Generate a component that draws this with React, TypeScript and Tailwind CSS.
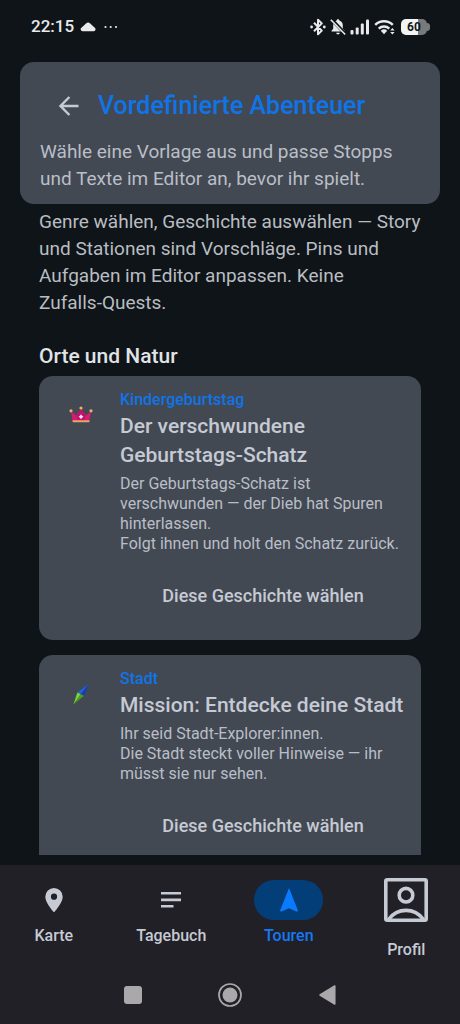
import type { ReactNode } from "react";

type Story = {
  genre: string;
  title: string;
  lines: string[];
  icon: ReactNode;
};

function CrownIcon() {
  return (
    <svg viewBox="0 0 24 18" className="h-[18px] w-6" aria-hidden="true">
      <path
        d="M2 5.2 7.2 9.4 12 2.8 16.8 9.4 22 5.2 20.4 15H3.6Z"
        fill="#d81b72"
      />
      <path d="M7.2 9.4 12 2.8 16.8 9.4 15 15H9Z" fill="#c2136b" />
      <path d="M3.4 14.3h17.2l-.4 2H3.8Z" fill="#e3a869" />
      <circle cx="2" cy="4.8" r="1.6" fill="#e8b36c" />
      <circle cx="12" cy="2" r="1.6" fill="#e8b36c" />
      <circle cx="22" cy="4.8" r="1.6" fill="#e8b36c" />
      <path
        d="m12 8.2 1 1.5 1.5 1-1.5 1-1 1.6-1-1.6-1.5-1 1.5-1Z"
        fill="#ffe3f3"
      />
    </svg>
  );
}

function NeedleIcon() {
  return (
    <svg viewBox="0 0 18 24" className="h-6 w-[18px]" aria-hidden="true">
      <path d="M17.2 1.8 5.4 10.6l3.3 1.6Z" fill="#1f63e0" />
      <path d="M17.2 1.8 8.7 12.2l3.4 1.6Z" fill="#143fae" />
      <path d="M5.4 10.6 1.4 22.4l7.3-10.2Z" fill="#7fd63a" />
      <path d="M12.1 13.8 1.4 22.4l7.3-10.2Z" fill="#4e9c24" />
    </svg>
  );
}

const stories: Story[] = [
  {
    genre: "Kindergeburtstag",
    title: "Der verschwundene Geburtstags-Schatz",
    lines: [
      "Der Geburtstags-Schatz ist verschwunden — der Dieb hat Spuren hinterlassen.",
      "Folgt ihnen und holt den Schatz zurück.",
    ],
    icon: <CrownIcon />,
  },
  {
    genre: "Stadt",
    title: "Mission: Entdecke deine Stadt",
    lines: [
      "Ihr seid Stadt-Explorer:innen.",
      "Die Stadt steckt voller Hinweise — ihr müsst sie nur sehen.",
    ],
    icon: <NeedleIcon />,
  },
];

function StatusBar() {
  return (
    <div className="flex h-[62px] shrink-0 items-start justify-between pl-[31px] pr-[30px] pt-4 text-[#e8eaec]">
      <div className="flex h-[22px] items-center gap-1.5">
        <span className="text-[17px] font-medium">22:15</span>
        <svg viewBox="0 0 16 10" className="h-2.5 w-4" fill="currentColor" aria-hidden="true">
          <path d="M2.6 9.2A1.9 1.9 0 0 1 1.700 5.600L6 1.400a3 3 0 0 1 4.200.2l4.600 4.200a1.900 1.900 0 0 1-.9 3.400Z" />
        </svg>
        <svg viewBox="0 0 14 4" className="ml-0.5 h-1 w-3.5" fill="currentColor" aria-hidden="true">
          <circle cx="1.5" cy="2" r="1.1" />
          <circle cx="6.7" cy="2" r="1.1" />
          <circle cx="12" cy="2" r="1.1" />
        </svg>
      </div>

      <div className="flex h-[22px] items-center gap-1">
        <svg viewBox="0 0 16 18" className="h-[18px] w-4" aria-hidden="true">
          <path
            d="M4 4.800 11.800 12.600 8 16.300V1.700l3.800 3.700L4 13.200"
            fill="none"
            stroke="currentColor"
            strokeWidth="2"
            strokeLinejoin="round"
          />
          <circle cx="1.6" cy="9" r="1.4" fill="currentColor" />
          <circle cx="14.3" cy="9" r="1.4" fill="currentColor" />
        </svg>
        <svg viewBox="0 0 16 18" className="h-[18px] w-4" aria-hidden="true">
          <path
            d="M8 1.2c.8 0 1.3.5 1.3 1.2 2.2.6 3.5 2.4 3.5 4.8v3.6l1.7 2v.8H1.5v-.8l1.7-2V7.2c0-2.4 1.3-4.2 3.5-4.8 0-.7.5-1.2 1.3-1.2ZM6.2 14.7h3.6a1.8 1.8 0 0 1-3.600 0Z"
            fill="currentColor"
          />
          <path d="m1.2 1 14 14.8" stroke="#0e1418" strokeWidth="3.4" />
          <path d="m.8 1.8 14.400 14.700" stroke="currentColor" strokeWidth="1.6" />
        </svg>
        <svg viewBox="0 0 20 16" className="h-4 w-5" fill="currentColor" aria-hidden="true">
          <rect x="0.5" y="11" width="3" height="4.5" rx="1" />
          <rect x="5.7" y="8.5" width="3" height="7" rx="1" />
          <rect x="10.8" y="4.5" width="3" height="11" rx="1" />
          <rect x="16" y="0.5" width="3" height="15" rx="1" />
        </svg>
        <svg viewBox="0 0 22 16" className="h-4 w-[22px]" aria-hidden="true">
          <g fill="none" stroke="currentColor" strokeWidth="2.4">
            <path d="M1.2 5.800a12.500 12.500 0 0 1 17.600 0" />
            <path d="M4.700 9.600a7.600 7.600 0 0 1 10.600 0" />
          </g>
          <path d="M6.8 11.7a4.700 4.700 0 0 1 6.400 0L10 15.200Z" fill="currentColor" />
          <path d="m16.200 11.500 2.200-2.600 2.200 2.600ZM16.200 12.900l2.200 2.600 2.200-2.600Z" fill="currentColor" />
        </svg>
        <span className="ml-px flex items-center">
          <span className="flex h-4 w-[26px] items-center justify-center rounded-[5px] bg-linear-to-r from-[#f2f3f4] from-65% to-[#777a7d] to-65% text-[12px] font-bold text-[#15181b]">
            60
          </span>
          <span className="h-2 w-[3px] rounded-r-full bg-[#777a7d]" />
        </span>
      </div>
    </div>
  );
}

function StoryCard({ story }: { story: Story }) {
  return (
    <article className="flex gap-3 rounded-[14px] bg-[#434952] px-[15px] pb-6 pt-3">
      <div className="flex h-[54px] w-[54px] shrink-0 items-center justify-center">
        {story.icon}
      </div>
      <div className="min-w-0 flex-1">
        <p className="text-[16px] font-medium leading-6 text-[#0f74e8]">
          {story.genre}
        </p>
        <h3 className="text-[21px] font-medium leading-[29px]">{story.title}</h3>
        <div className="mt-1 text-[16px] leading-5 text-[#b9bec8]">
          {story.lines.map((line) => (
            <p key={line}>{line}</p>
          ))}
        </div>
        <button
          type="button"
          className="mt-5 h-[42px] w-full text-[18px] font-medium"
        >
          Diese Geschichte wählen
        </button>
      </div>
    </article>
  );
}

function BottomNav() {
  return (
    <nav className="grid grid-cols-4 gap-2.5 pb-1.5 pt-[7px] text-[16px] font-medium leading-5">
      <a href="#karte" className="flex flex-col items-center pt-2">
        <span className="flex h-10 items-center">
          <svg viewBox="0 0 18 24" className="h-6 w-[18px]" aria-hidden="true">
            <path
              d="M9 0a8.700 8.700 0 0 0-8.700 8.700C.3 15 9 24.400 9 24.400S17.700 15 17.700 8.700A8.700 8.700 0 0 0 9 0Zm0 11.800a3.100 3.100 0 1 1 0-6.200 3.100 3.100 0 0 1 0 6.200Z"
              fill="currentColor"
            />
          </svg>
        </span>
        <span className="mt-1.5">Karte</span>
      </a>
      <a href="#tagebuch" className="flex flex-col items-center pt-2">
        <span className="flex h-10 items-center">
          <svg viewBox="0 0 20 16" className="h-4 w-5" fill="currentColor" aria-hidden="true">
            <path d="M0 0h20v2.600H0ZM0 6.600h20v2.600H0ZM0 13h12.500v2.600H0Z" />
          </svg>
        </span>
        <span className="mt-1.5">Tagebuch</span>
      </a>
      <a
        href="#touren"
        aria-current="page"
        className="flex flex-col items-center pt-2 text-[#1479f5]"
      >
        <span className="flex h-10 w-[69px] items-center justify-center rounded-full bg-[#043e78]">
          <svg viewBox="0 0 18 24" className="h-6 w-[18px]" aria-hidden="true">
            <path d="M9 0 18 22.800l-1 .9-8-3.500-8 3.500-1-.9Z" fill="#0a7aff" />
          </svg>
        </span>
        <span className="mt-1.5">Touren</span>
      </a>
      <a href="#profil" className="flex flex-col items-center">
        <span className="flex h-14 items-center">
          <svg
            viewBox="0 0 44 44"
            className="size-11"
            fill="none"
            stroke="currentColor"
            strokeWidth="3.600"
            aria-hidden="true"
          >
            <rect x="1.800" y="1.800" width="40.400" height="40.400" rx="1.500" />
            <circle cx="22" cy="17.200" r="6.800" />
            <path d="M4.500 41.500C9 35.500 15.500 32.400 22 32.400s13 3.100 17.500 9.100" />
          </svg>
        </span>
        <span className="mt-3">Profil</span>
      </a>
    </nav>
  );
}

function SystemBar() {
  return (
    <div className="flex h-[58px] items-center justify-center gap-[73px] text-[#aaa8aa]">
      <button type="button" aria-label="Letzte Apps" className="flex w-6 justify-center">
        <span className="size-[18px] rounded-[3px] bg-current" />
      </button>
      <button type="button" aria-label="Startbildschirm" className="flex w-6 justify-center">
        <svg viewBox="0 0 24 24" className="size-6" aria-hidden="true">
          <circle cx="12" cy="12" r="11" fill="none" stroke="currentColor" strokeWidth="1.700" />
          <circle cx="12" cy="12" r="7.500" fill="currentColor" />
        </svg>
      </button>
      <button type="button" aria-label="Zurück" className="flex w-6 justify-center">
        <svg viewBox="0 0 17 20" className="h-5 w-[17px]" aria-hidden="true">
          <path
            d="M15.800 1v18L1 10Z"
            fill="currentColor"
            stroke="currentColor"
            strokeWidth="1.500"
            strokeLinejoin="round"
          />
        </svg>
      </button>
    </div>
  );
}

export default function App() {
  return (
    <div className="flex h-dvh flex-col bg-[#0e1418] font-[Roboto,sans-serif] text-[#c5cad4]">
      <StatusBar />

      <main className="mb-2.5 min-h-0 flex-1 overflow-hidden">
        <header className="mx-5 rounded-[14px] bg-[#434952] px-5 pb-3 pt-5">
          <div className="flex h-12 items-center">
            <button
              type="button"
              aria-label="Zurück"
              className="flex h-12 w-[58px] items-center justify-center"
            >
              <svg viewBox="0 0 20 20" className="size-5" aria-hidden="true">
                <path
                  d="M19.500 10H1.800M10.400 1 1.500 10l8.900 9"
                  fill="none"
                  stroke="currentColor"
                  strokeWidth="2.400"
                />
              </svg>
            </button>
            <h1 className="text-[25px] font-medium text-[#0f74e8]">
              Vordefinierte Abenteuer
            </h1>
          </div>
          <p className="mt-2 text-[19px] leading-[27px] text-[#b9bec8]">
            Wähle eine Vorlage aus und passe Stopps und Texte im Editor an,
            bevor ihr spielt.
          </p>
        </header>

        <section className="px-[39px] pt-1">
          <p className="text-[19px] leading-[27px] text-[#b9bdc2]">
            Genre wählen, Geschichte auswählen — Story und Stationen sind
            Vorschläge. Pins und Aufgaben im Editor anpassen. Keine{" "}
            <span className="whitespace-nowrap">Zufalls-Quests.</span>
          </p>

          <h2 className="mt-6 text-[21px] font-medium leading-8 text-[#e1e4e7]">
            Orte und Natur
          </h2>
          <div className="mt-1 flex flex-col gap-[15px]">
            {stories.map((story) => (
              <StoryCard key={story.title} story={story} />
            ))}
          </div>
        </section>
      </main>

      <footer className="shrink-0 bg-[#202026]">
        <BottomNav />
        <SystemBar />
      </footer>
    </div>
  );
}
